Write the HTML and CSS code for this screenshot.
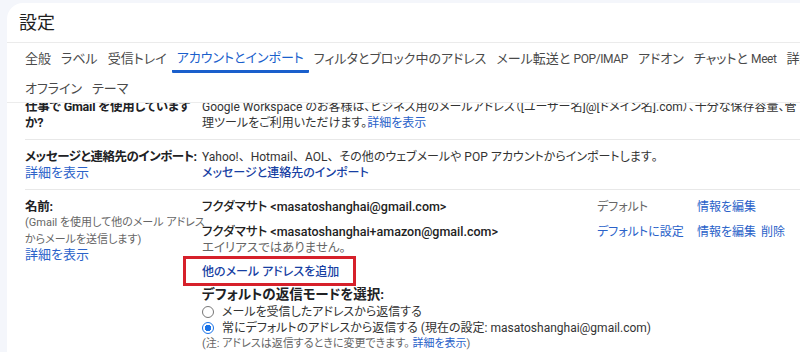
FILE: index.html
```html
<!DOCTYPE html>
<html lang="ja">
<head>
<meta charset="utf-8">
<title>設定</title>
<link rel="stylesheet" href="styles.css">
</head>
<body>
<div class="panel">
  <div class="title">設定</div>
  <nav class="tabs">
    <div class="tabrow">
      <span class="tab">全般</span>
      <span class="tab">ラベル</span>
      <span class="tab">受信トレイ</span>
      <span class="tab active">アカウントとインポート</span>
      <span class="tab">フィルタとブロック中のアドレス</span>
      <span class="tab">メール転送と <span class="latin">POP/IMAP</span></span>
      <span class="tab">アドオン</span>
      <span class="tab">チャットと <span class="latin">Meet</span></span>
      <span class="tab">詳細</span>
    </div>
    <div class="tabrow">
      <span class="tab">オフライン</span>
      <span class="tab">テーマ</span>
    </div>
  </nav>
  <div class="content">
    <div class="list">
      <div class="row">
        <div class="label"><b>仕事で Gmail を使用しています<br>か?</b></div>
        <div class="value">
          <div class="nowrap">Google Workspace のお客様は、ビジネス用のメールアドレス（[ユーザー名]@[ドメイン名].com）、十分な保存容量、管</div>
          <div>理ツールをご利用いただけます。<a class="link">詳細を表示</a></div>
        </div>
      </div>
      <div class="row">
        <div class="label"><b class="nowrap tight">メッセージと連絡先のインポート:</b><br><a class="link">詳細を表示</a></div>
        <div class="value">
          <div>Yahoo!<span class="fw">、</span>Hotmail<span class="fw">、</span>AOL<span class="fw">、</span>その他のウェブメールや POP アカウントからインポートします<span class="fw">。</span></div>
          <a class="link strong">メッセージと連絡先のインポート</a>
        </div>
      </div>
      <div class="row">
        <div class="label">
          <b>名前:</b>
          <div class="hint">(Gmail を使用して他のメール アドレス<br>からメールを送信します)</div>
          <a class="link">詳細を表示</a>
        </div>
        <div class="value">
          <div class="addr">
            <span class="name">フクダマサト &lt;masatoshanghai@gmail.com&gt;</span>
            <span class="muted">デフォルト</span>
            <a class="link">情報を編集</a>
            <span></span>
          </div>
          <div class="addr second">
            <span class="name">フクダマサト &lt;masatoshanghai+amazon@gmail.com&gt;</span>
            <a class="link">デフォルトに設定</a>
            <a class="link">情報を編集</a>
            <a class="link">削除</a>
          </div>
          <div class="muted alias">エイリアスではありません<span class="fw">。</span></div>
          <a class="link strong add">他のメール アドレスを追加</a>
          <div class="reply-title"><b>デフォルトの返信モードを選択:</b></div>
          <label class="radio"><span class="dot"></span>メールを受信したアドレスから返信する</label>
          <label class="radio"><span class="dot on"></span>常にデフォルトのアドレスから返信する (現在の設定: masatoshanghai@gmail.com)</label>
          <div class="note">(注: アドレスは返信するときに変更できます。 <a class="link">詳細を表示</a>)</div>
        </div>
      </div>
    </div>
  </div>
</div>
</body>
</html>
```

FILE: styles.css
```css
html, body {
  margin: 0;
  padding: 0;
}
body {
  width: 800px;
  height: 352px;
  overflow: hidden;
  background: #f4f6fb;
  font-family: "Roboto", "Noto Sans CJK JP", sans-serif;
  font-feature-settings: "palt";
  color: #222;
  font-size: 12px;
}
.panel {
  margin: 3px 0 0 7px;
  width: 860px;
  height: 349px;
  background: #fff;
  border-top-left-radius: 16px;
  display: flex;
  flex-direction: column;
  overflow: hidden;
}
.title {
  flex: none;
  height: 36px;
  display: flex;
  align-items: center;
  padding: 0 12px 3px;
  font-size: 18px;
  color: #1f1f1f;
  border-bottom: 1px solid #ebebeb;
}
.tabs {
  flex: none;
  height: 59px;
  overflow: hidden;
  padding-left: 13px;
  border-bottom: 1px solid #ececec;
  font-size: 13px;
}
.tabrow {
  display: flex;
  white-space: nowrap;
  height: 30px;
}
.tab {
  height: 30px;
  line-height: 31px;
  padding: 0 5px;
  color: #4a4a4a;
  white-space: nowrap;
  box-sizing: border-box;
}
.latin {
  font-size: 12px;
  letter-spacing: -0.4px;
}
.tab.active {
  color: #1a5fcc;
  border-bottom: 3px solid #1a5fcc;
  border-radius: 1px;
  line-height: 29px;
}
.content {
  flex: 1;
  overflow: hidden;
}
.list {
  margin-top: -13px;
  padding-left: 18px;
}
.row {
  display: grid;
  grid-template-columns: 177px 1fr;
  padding: 9px 0 8px;
  border-bottom: 1px solid #e8e8e8;
  line-height: 16px;
}
.label {
  font-size: 13px;
}
.label b, .reply-title b {
  font-weight: 700;
  color: #202124;
}
.label b {
  font-size: 12.5px;
  letter-spacing: -0.2px;
}
.label b.tight {
  letter-spacing: -0.45px;
}
.nowrap {
  white-space: nowrap;
}
.fw {
  font-feature-settings: normal;
}
.value {
  color: #333;
}
.link {
  color: #2a62c9;
  cursor: pointer;
}
.link.strong {
  color: #173fa3;
  font-weight: 500;
}
.hint {
  font-size: 11px;
  line-height: 17px;
  color: #666;
  margin-top: -1px;
  margin-bottom: -1px;
  white-space: nowrap;
}
.addr {
  display: grid;
  grid-template-columns: 395px 100px 64px auto;
}
.addr.second {
  margin-top: 9px;
}
.name {
  font-weight: 500;
  color: #222;
  font-size: 12.5px;
}
.muted {
  color: #666;
}
.alias {
  font-size: 12.5px;
}
.add {
  display: inline-block;
  position: relative;
  margin-top: 8px;
  font-weight: 700;
}
.add::after {
  content: "";
  position: absolute;
  top: -8px;
  bottom: -6px;
  left: -19px;
  right: -17px;
  border: 3px solid #d6202a;
}
.reply-title {
  margin-top: 6px;
  margin-bottom: 2px;
  font-size: 13.5px;
}
.radio {
  display: flex;
  align-items: center;
  height: 16px;
  gap: 8px;
  color: #333;
}
.dot {
  width: 10px;
  height: 10px;
  border: 1px solid #777;
  border-radius: 50%;
  box-sizing: content-box;
  flex: none;
}
.dot.on {
  border-color: #1a73e8;
  background: radial-gradient(circle, #1a73e8 0 3px, #fff 3.5px);
}
.note {
  font-size: 11px;
  color: #666;
}
```
